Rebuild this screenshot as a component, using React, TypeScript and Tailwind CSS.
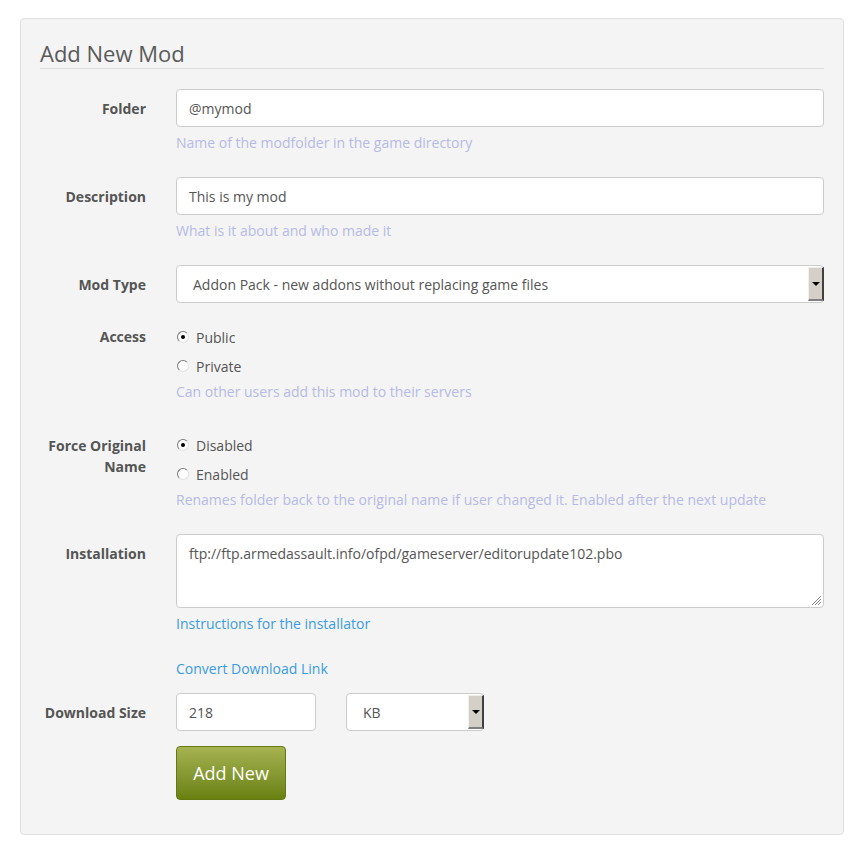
import React from "react";

const Radio = ({ checked, label }: { checked?: boolean; label: string }) => (
  <div className="flex items-center h-[20px]">
    <span className="relative w-[12px] h-[12px] rounded-full bg-white border border-t-[#7a7a7a] border-l-[#7a7a7a] border-r-[#e3e3e3] border-b-[#e3e3e3] ml-[1px]">
      {checked && (
        <span className="absolute left-[3px] top-[3px] w-[4px] h-[4px] rounded-full bg-black" />
      )}
    </span>
    <span className="ml-[7px]">{label}</span>
  </div>
);

const SelectBox = ({ value, className }: { value: string; className: string }) => (
  <div
    className={`flex items-center bg-white border border-[#ccc] rounded-[4px] ${className}`}
  >
    <span className="flex-1 pl-[16px] truncate">{value}</span>
    <span className="flex items-center justify-center w-[16px] self-stretch my-[1px] mr-[-1px] bg-[#d4d0c8] border-t border-l border-t-[#f0efeb] border-l-[#f0efeb] border-r-2 border-b-2 border-r-[#404040] border-b-[#808080]">
      <span className="w-0 h-0 border-l-[4px] border-r-[4px] border-t-[4px] border-l-transparent border-r-transparent border-t-black" />
    </span>
  </div>
);

const Label = ({ children, className = "" }: { children: React.ReactNode; className?: string }) => (
  <div className={`w-[106px] shrink-0 text-right font-bold text-[#555] leading-[20px] ${className}`}>
    {children}
  </div>
);

const Help = ({ children }: { children: React.ReactNode }) => (
  <div className="mt-[6px] leading-[20px] text-[#b6bae7]">{children}</div>
);

export default function App() {
  return (
    <div
      className="min-h-screen bg-white pt-[18px] px-[20px] pb-[10px] text-[14px] text-[#555]"
      style={{ fontFamily: '"Open Sans", "Liberation Sans", sans-serif' }}
    >
      <div className="w-[824px] bg-[#f4f4f4] border border-[#e0e0e0] rounded-[4px] px-[19px] pt-[22px] pb-[34px]">
        <div className="text-[22px] leading-[24px] text-[#5a5a5a] pb-[3px] border-b border-[#ddd]">
          Add New Mod
        </div>

        <div className="flex gap-[30px] mt-[20px]">
          <Label className="pt-[10px]">Folder</Label>
          <div className="flex-1">
            <div className="h-[38px] bg-white border border-[#ccc] rounded-[4px] pl-[12px] flex items-center">
              @mymod
            </div>
            <Help>Name of the modfolder in the game directory</Help>
          </div>
        </div>

        <div className="flex gap-[30px] mt-[24px]">
          <Label className="pt-[10px]">Description</Label>
          <div className="flex-1">
            <div className="h-[38px] bg-white border border-[#ccc] rounded-[4px] pl-[12px] flex items-center">
              This is my mod
            </div>
            <Help>What is it about and who made it</Help>
          </div>
        </div>

        <div className="flex gap-[30px] mt-[24px]">
          <Label className="pt-[10px]">Mod Type</Label>
          <div className="flex-1">
            <SelectBox value="Addon Pack - new addons without replacing game files" className="h-[38px]" />
          </div>
        </div>

        <div className="flex gap-[30px] mt-[24px]">
          <Label>Access</Label>
          <div className="flex-1">
            <Radio checked label="Public" />
            <div className="mt-[9px]">
              <Radio label="Private" />
            </div>
            <Help>Can other users add this mod to their servers</Help>
          </div>
        </div>

        <div className="flex gap-[30px] mt-[33px]">
          <Label className="leading-[21px]">
            Force Original
            <br />
            Name
          </Label>
          <div className="flex-1">
            <Radio checked label="Disabled" />
            <div className="mt-[9px]">
              <Radio label="Enabled" />
            </div>
            <Help>Renames folder back to the original name if user changed it. Enabled after the next update</Help>
          </div>
        </div>

        <div className="flex gap-[30px] mt-[24px]">
          <Label className="pt-[10px]">Installation</Label>
          <div className="flex-1">
            <div className="relative h-[74px] bg-white border border-[#ccc] rounded-[4px] pl-[12px] pt-[9px] leading-[20px]">
              ftp://ftp.armedassault.info/ofpd/gameserver/editorupdate102.pbo
              <svg className="absolute right-[1px] bottom-[1px]" width="12" height="12" viewBox="0 0 12 12">
                <line x1="11" y1="2" x2="2" y2="11" stroke="#888" strokeWidth="1" />
                <line x1="11" y1="5" x2="5" y2="11" stroke="#888" strokeWidth="1" />
                <line x1="11" y1="8" x2="8" y2="11" stroke="#888" strokeWidth="1" />
              </svg>
            </div>
            <div className="mt-[6px] leading-[20px] text-[#3a9be6]">Instructions for the installator</div>
            <div className="mt-[25px] leading-[20px] text-[#3a9be6]">Convert Download Link</div>
          </div>
        </div>

        <div className="flex gap-[30px] mt-[14px]">
          <Label className="pt-[10px]">Download Size</Label>
          <div className="flex-1 flex gap-[30px]">
            <div className="w-[140px] h-[38px] bg-white border border-[#ccc] rounded-[4px] pl-[12px] flex items-center">
              218
            </div>
            <SelectBox value="KB" className="w-[138px] h-[38px]" />
          </div>
        </div>

        <div className="flex gap-[30px] mt-[15px]">
          <div className="w-[106px] shrink-0" />
          <button className="w-[110px] h-[54px] rounded-[4px] border border-[#647813] bg-gradient-to-b from-[#a6b350] to-[#6a8110] text-white text-[18px]">
            Add New
          </button>
        </div>
      </div>
    </div>
  );
}
